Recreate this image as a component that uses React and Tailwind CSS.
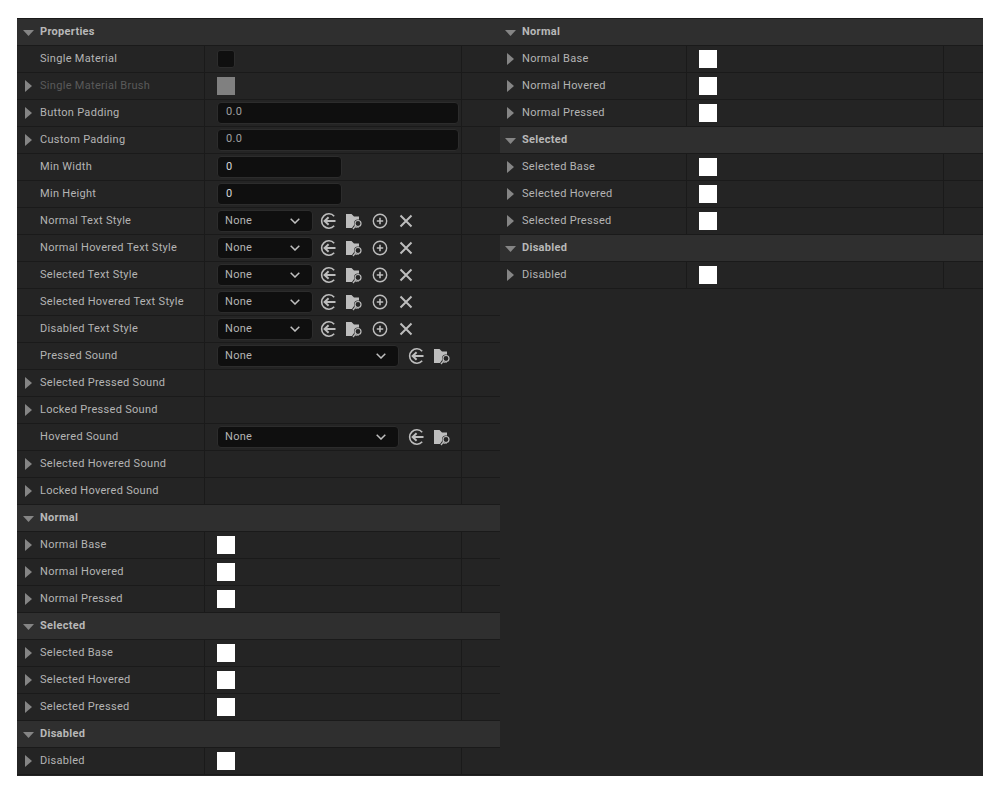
const leftRows = [
  { type: 'header', label: 'Properties' },
  { label: 'Single Material', value: 'check' },
  { label: 'Single Material Brush', arrow: true, dim: true, value: 'brush' },
  { label: 'Button Padding', arrow: true, value: 'wide', text: '0.0' },
  { label: 'Custom Padding', arrow: true, value: 'wide', text: '0.0' },
  { label: 'Min Width', value: 'num' },
  { label: 'Min Height', value: 'num' },
  { label: 'Normal Text Style', value: 'style' },
  { label: 'Normal Hovered Text Style', value: 'style' },
  { label: 'Selected Text Style', value: 'style' },
  { label: 'Selected Hovered Text Style', value: 'style' },
  { label: 'Disabled Text Style', value: 'style' },
  { label: 'Pressed Sound', value: 'sound' },
  { label: 'Selected Pressed Sound', arrow: true },
  { label: 'Locked Pressed Sound', arrow: true },
  { label: 'Hovered Sound', value: 'sound' },
  { label: 'Selected Hovered Sound', arrow: true },
  { label: 'Locked Hovered Sound', arrow: true },
];

const colorRows = [
  { type: 'header', label: 'Normal' },
  { label: 'Normal Base', arrow: true, value: 'white' },
  { label: 'Normal Hovered', arrow: true, value: 'white' },
  { label: 'Normal Pressed', arrow: true, value: 'white' },
  { type: 'header', label: 'Selected' },
  { label: 'Selected Base', arrow: true, value: 'white' },
  { label: 'Selected Hovered', arrow: true, value: 'white' },
  { label: 'Selected Pressed', arrow: true, value: 'white' },
  { type: 'header', label: 'Disabled' },
  { label: 'Disabled', arrow: true, value: 'white' },
];

const ArrowRight = ({ right }) => (
  <svg width="7" height="12" viewBox="0 0 7 12" className={`absolute top-[7px] ${right ? 'left-[7px]' : 'left-[8px]'}`}>
    <path d="M0 0 L7 6 L0 12 Z" fill="#858585" />
  </svg>
);

const ArrowDown = ({ right }) => (
  <svg width="11" height="6" viewBox="0 0 11 6" className={`absolute top-[11px] ${right ? 'left-[5px]' : 'left-[6px]'}`}>
    <path d="M0 0 L11 0 L5.5 6 Z" fill="#858585" />
  </svg>
);

const BackIcon = () => (
  <svg width="16" height="16" viewBox="0 0 16 16" fill="none" stroke="#bdbdbd">
    <path d="M14.2 3.2 A7.2 7.2 0 1 0 14.2 12.8" strokeWidth="1.6" />
    <path d="M8.6 4.2 L4.6 8 L8.6 11.8 M4.8 8 H15.5" strokeWidth="2" />
  </svg>
);

const FolderIcon = () => (
  <svg width="16" height="17" viewBox="0 0 16 17" fill="none">
    <path d="M0 1 H5.5 L8 3.5 H13 V15 H0 Z" fill="#bdbdbd" />
    <path d="M13 5.5 H16 V15 H13 Z" fill="#242424" />
    <circle cx="12" cy="10.5" r="4" fill="#242424" />
    <path d="M9 13 L6.5 16.5" stroke="#242424" strokeWidth="2.6" />
    <circle cx="12" cy="10.5" r="3" stroke="#bdbdbd" strokeWidth="1.2" />
    <path d="M9.8 12.7 L7 16" stroke="#bdbdbd" strokeWidth="1.3" />
  </svg>
);

const PlusIcon = () => (
  <svg width="16" height="16" viewBox="0 0 16 16" fill="none" stroke="#bdbdbd">
    <circle cx="8" cy="8" r="6.7" strokeWidth="1.4" />
    <path d="M8 4.8 V11.2 M4.8 8 H11.2" strokeWidth="1.6" />
  </svg>
);

const CloseIcon = () => (
  <svg width="14" height="14" viewBox="0 0 14 14" fill="none" stroke="#bdbdbd" strokeWidth="2">
    <path d="M1.5 1.5 L12.5 12.5 M12.5 1.5 L1.5 12.5" />
  </svg>
);

const Combo = ({ width }) => (
  <div className={`${width} h-[22px] shrink-0 flex items-center justify-between pl-[7px] pr-[12px] bg-[#0f0f0f] border border-[#2c2c2c] rounded-[4px]`}>
    <span className="text-[#b4b4b4]">None</span>
    <svg width="10" height="6" viewBox="0 0 10 6" fill="none" stroke="#c0c0c0" strokeWidth="1.5">
      <path d="M0.7 0.7 L5 5 L9.3 0.7" />
    </svg>
  </div>
);

const ValueCell = ({ row }) => {
  if (row.value === 'check') {
    return <div className="w-[18px] h-[18px] bg-[#0f0f0f] border border-[#2c2c2c] rounded-[3px]" />;
  }
  if (row.value === 'brush') {
    return <div className="w-[18px] h-[18px] bg-[#808080]" />;
  }
  if (row.value === 'white') {
    return <div className="w-[18px] h-[18px] bg-white" />;
  }
  if (row.value === 'wide') {
    return (
      <div className="w-[242px] h-[22px] pl-[8px] pb-[1px] flex items-center bg-[#0f0f0f] border border-[#2c2c2c] rounded-[4px] text-[#a0a0a0]">
        {row.text}
      </div>
    );
  }
  if (row.value === 'num') {
    return (
      <div className="w-[125px] h-[22px] pl-[8px] flex items-center bg-[#0f0f0f] border border-[#2c2c2c] rounded-[4px] text-[#d8d8d8]">
        0
      </div>
    );
  }
  if (row.value === 'style') {
    return (
      <div className="flex items-center">
        <Combo width="w-[96px]" />
        <div className="ml-[7px] w-[16px] flex justify-center"><BackIcon /></div>
        <div className="ml-[10px] w-[16px] flex justify-center"><FolderIcon /></div>
        <div className="ml-[10px] w-[16px] flex justify-center"><PlusIcon /></div>
        <div className="ml-[10px] w-[16px] flex justify-center"><CloseIcon /></div>
      </div>
    );
  }
  if (row.value === 'sound') {
    return (
      <div className="flex items-center">
        <Combo width="w-[182px]" />
        <div className="ml-[9px] w-[16px] flex justify-center"><BackIcon /></div>
        <div className="ml-[10px] w-[16px] flex justify-center"><FolderIcon /></div>
      </div>
    );
  }
  return null;
};

const Row = ({ row, right }) => {
  const labelPad = right ? 'pl-[22px]' : 'pl-[23px]';
  if (row.type === 'header') {
    return (
      <div className={`relative h-[27px] ${labelPad} flex items-center bg-[#2f2f2f] border-b border-[#1a1a1a] font-bold text-[#b8b8b8]`}>
        <ArrowDown right={right} />
        {row.label}
      </div>
    );
  }
  return (
    <div className="relative h-[27px] flex border-b border-[#1a1a1a]">
      {row.arrow && <ArrowRight right={right} />}
      <div className={`${right ? 'w-[187px]' : 'w-[188px]'} ${labelPad} flex items-center border-r border-[#1a1a1a] ${row.dim ? 'text-[#5a5a5a]' : 'text-[#b4b4b4]'}`}>
        {row.label}
      </div>
      <div className="w-[257px] pl-[12px] flex items-center border-r border-[#1a1a1a]">
        <ValueCell row={row} />
      </div>
      <div className="flex-1" />
    </div>
  );
};

export default function App() {
  return (
    <div className="min-h-[788px] bg-white pt-[18px] pl-[17px] font-['Roboto',sans-serif] text-[11px] tracking-[0.3px]">
      <div className="w-[966px] h-[758px] flex bg-[#242424] border-t border-[#1a1a1a]">
        <div className="w-[483px]">
          {leftRows.map((row) => <Row key={row.label} row={row} />)}
          {colorRows.map((row) => <Row key={row.label + row.type} row={row} />)}
        </div>
        <div className="flex-1">
          {colorRows.map((row) => <Row key={row.label + row.type} row={row} right />)}
        </div>
      </div>
    </div>
  );
}
